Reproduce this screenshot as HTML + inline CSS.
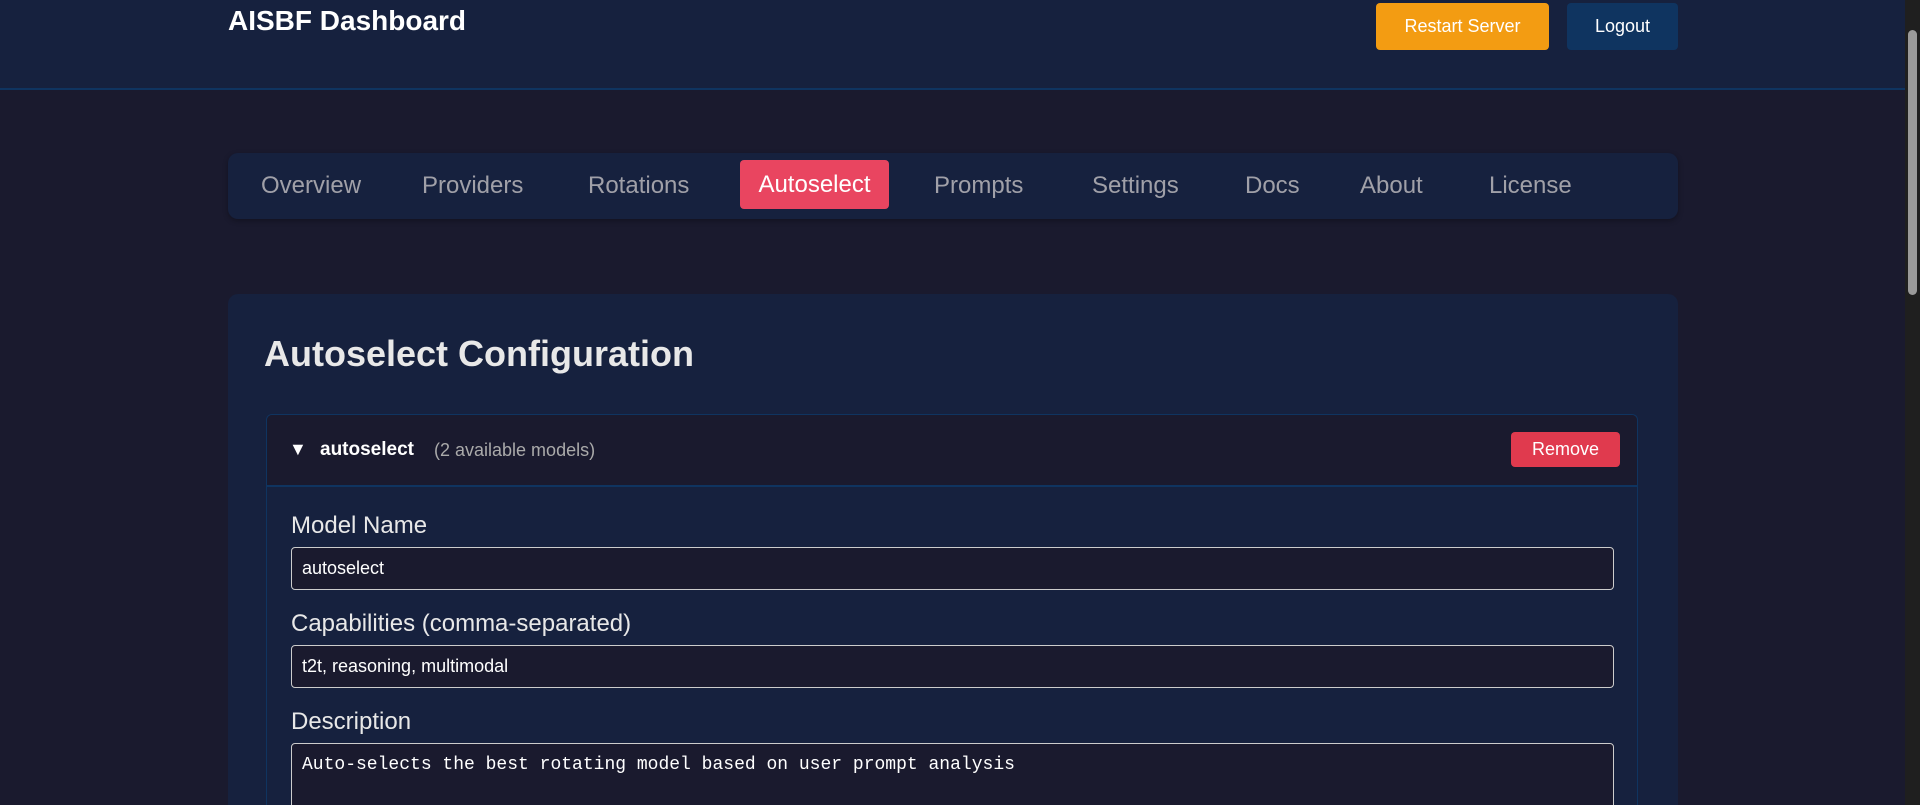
<!DOCTYPE html>
<html><head><meta charset="utf-8"><style>
*{box-sizing:border-box;margin:0;padding:0}
html{width:1920px;height:805px;overflow:hidden}
body{width:1920px;height:805px;overflow:hidden;background:#1a1a2e;font-family:"Liberation Sans",sans-serif;color:#e0e0e0;position:relative}
.hdr{position:absolute;left:0;top:0;width:1905px;height:90px;background:#16213e;border-bottom:2px solid #0f3460}
.title{position:absolute;left:228px;top:5px;font-size:28px;font-weight:bold;color:#fff}
.btn{position:absolute;top:3px;height:47px;border-radius:4px;color:#fff;font-size:18px;display:flex;align-items:center;justify-content:center}
.nav{position:absolute;left:228px;top:153px;width:1450px;height:66px;background:#16213e;border-radius:10px;box-shadow:0 2px 6px rgba(0,0,0,.3)}
.nav span{position:absolute;top:19px;font-size:24px;color:#a0a0a8}
.act{position:absolute;left:740px;top:160px;width:149px;height:49px;background:#e94560;border-radius:4px;color:#fff;font-size:24px;display:flex;align-items:center;justify-content:center}
.card{position:absolute;left:228px;top:294px;width:1450px;height:511px;background:#16213e;border-radius:10px 10px 0 0}
h2{position:absolute;left:264px;top:333px;font-size:36px;color:#e8e8e8}
.box{position:absolute;left:266px;top:414px;width:1372px;height:391px;border:1px solid #0f3460;border-bottom:none;border-radius:6px 6px 0 0;overflow:hidden}
.bh{position:absolute;left:0;top:0;width:100%;height:72px;background:#1a1a2e;border-bottom:2px solid #0f3460}
.lbl{position:absolute;left:291px;font-size:24px;color:#e8e8e8}
.inp{position:absolute;left:291px;width:1323px;height:43px;background:#1a1a2e;border:1px solid #ccc;border-radius:4px;font-size:18px;color:#fff;padding:10px 10px}
.sb{position:absolute;right:0;top:0;width:15px;height:805px;background:#1f1f1f}
</style></head><body>
<div class="hdr"></div>
<div class="title">AISBF Dashboard</div>
<div class="btn" style="left:1376px;width:173px;background:#f39c12">Restart Server</div>
<div class="btn" style="left:1567px;width:111px;background:#0f3460">Logout</div>
<div class="nav">
<span style="left:33px">Overview</span>
<span style="left:194px">Providers</span>
<span style="left:360px">Rotations</span>
<span style="left:706px">Prompts</span>
<span style="left:864px">Settings</span>
<span style="left:1017px">Docs</span>
<span style="left:1132px">About</span>
<span style="left:1261px">License</span>
</div>
<div class="act">Autoselect</div>
<div class="card"></div>
<h2>Autoselect Configuration</h2>
<div class="box"><div class="bh"></div></div>
<div style="position:absolute;left:289px;top:439px;font-size:18px;color:#fff">▼</div>
<div style="position:absolute;left:320px;top:439px;font-size:19px;font-weight:bold;color:#fff">autoselect</div>
<div style="position:absolute;left:434px;top:440px;font-size:18px;color:#aaa">(2 available models)</div>
<div class="btn" style="left:1511px;top:432px;width:109px;height:35px;background:#e03a4e;font-size:18px">Remove</div>
<div class="lbl" style="top:512px">Model Name</div>
<div class="inp" style="top:547px">autoselect</div>
<div class="lbl" style="top:610px">Capabilities (comma-separated)</div>
<div class="inp" style="top:645px">t2t, reasoning, multimodal</div>
<div class="lbl" style="top:708px">Description</div>
<div class="inp" style="top:743px;height:70px;font-family:'Liberation Mono',monospace;font-size:18px;padding-top:11px">Auto-selects the best rotating model based on user prompt analysis</div>
<div class="sb"><div style="position:absolute;left:3px;top:30px;width:9px;height:265px;background:#9a9a9a;border-radius:5px"></div></div>
</body></html>
